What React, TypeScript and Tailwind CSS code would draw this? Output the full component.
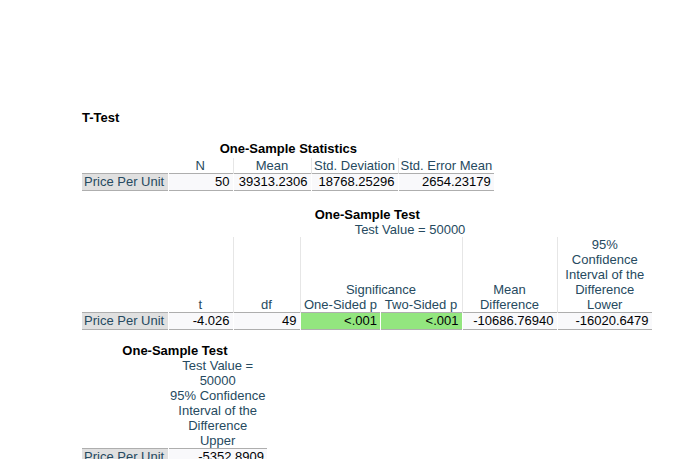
import React from 'react'

const hd = 'text-[#264a60] text-center align-bottom px-[2px] leading-[15px] font-normal whitespace-nowrap'
const hdLine = 'border-r border-[#e6e6e6]'
const lbl = 'bg-[#e0e0e0] text-[#264a60] text-left pl-[2px] h-[16px] leading-[16px] border-r border-white whitespace-nowrap'
const cell = 'bg-[#f9f9fb] text-[#010205] text-right pr-[3px] h-[16px] leading-[16px] border-r border-white whitespace-nowrap'
const sig = 'bg-[#93e67f] text-[#010205] text-right pr-[3px] h-[16px] leading-[16px] border-r border-white whitespace-nowrap'

const App = () => {
  return (
    <div className="h-[459px] w-[680px] overflow-hidden bg-white pl-[82px] pt-[110px] font-['Liberation_Sans',Arial,sans-serif] text-[13px]">
      <div className="font-bold leading-[15px] text-black">T-Test</div>

      {/* One-Sample Statistics */}
      <table className="mt-[16px] table-fixed border-collapse">
        <caption className="pb-[2px] text-center font-bold leading-[15px] text-black">One-Sample Statistics</caption>
        <colgroup>
          <col className="w-[86px]" />
          <col className="w-[65px]" />
          <col className="w-[78px]" />
          <col className="w-[87px]" />
          <col className="w-[95px]" />
        </colgroup>
        <thead>
          <tr className="border-b border-[#aeaeae]">
            <th className={hd}></th>
            <th className={hd + ' ' + hdLine}>N</th>
            <th className={hd + ' ' + hdLine}>Mean</th>
            <th className={hd + ' ' + hdLine}>Std. Deviation</th>
            <th className={hd}>Std. Error Mean</th>
          </tr>
        </thead>
        <tbody>
          <tr className="border-b border-[#aeaeae]">
            <td className={lbl}>Price Per Unit</td>
            <td className={cell}>50</td>
            <td className={cell}>39313.2306</td>
            <td className={cell}>18768.25296</td>
            <td className={cell}>2654.23179</td>
          </tr>
        </tbody>
      </table>

      {/* One-Sample Test */}
      <table className="mt-[16px] table-fixed border-collapse">
        <caption className="text-center font-bold leading-[15px] text-black">One-Sample Test</caption>
        <colgroup>
          <col className="w-[86px]" />
          <col className="w-[65px]" />
          <col className="w-[67px]" />
          <col className="w-[80px]" />
          <col className="w-[81px]" />
          <col className="w-[95px]" />
          <col className="w-[95px]" />
        </colgroup>
        <thead>
          <tr>
            <th className={hd}></th>
            <th className={hd} colSpan={6}>Test Value = 50000</th>
          </tr>
          <tr className="border-b border-[#aeaeae]">
            <th className={hd}></th>
            <th className={hd + ' ' + hdLine}>t</th>
            <th className={hd + ' ' + hdLine}>df</th>
            <th className="p-0 align-bottom font-normal text-[#264a60] leading-[15px]" colSpan={2}>
              <div className="text-center">Significance</div>
              <div className="flex">
                <div className="w-[80px] whitespace-nowrap text-center">One-Sided p</div>
                <div className="w-[81px] whitespace-nowrap text-center">Two-Sided p</div>
              </div>
            </th>
            <th className={hd + ' border-l border-[#e6e6e6] ' + hdLine}>
              Mean
              <br />
              Difference
            </th>
            <th className={hd}>
              95%
              <br />
              Confidence
              <br />
              Interval of the
              <br />
              Difference
              <br />
              Lower
            </th>
          </tr>
        </thead>
        <tbody>
          <tr className="border-b border-[#aeaeae]">
            <td className={lbl}>Price Per Unit</td>
            <td className={cell}>-4.026</td>
            <td className={cell}>49</td>
            <td className={sig}>&lt;.001</td>
            <td className={sig}>&lt;.001</td>
            <td className={cell}>-10686.76940</td>
            <td className={cell}>-16020.6479</td>
          </tr>
        </tbody>
      </table>

      {/* One-Sample Test, continued */}
      <table className="mt-[13px] table-fixed border-collapse">
        <caption className="text-center font-bold leading-[15px] text-black">One-Sample Test</caption>
        <colgroup>
          <col className="w-[86px]" />
          <col className="w-[93px]" />
        </colgroup>
        <thead>
          <tr className="border-b border-[#aeaeae]">
            <th className={hd}></th>
            <th className={hd + ' leading-[14.6px]'}>
              Test Value =
              <br />
              50000
              <br />
              95% Confidence
              <br />
              Interval of the
              <br />
              Difference
              <br />
              Upper
            </th>
          </tr>
        </thead>
        <tbody>
          <tr className="border-b border-[#aeaeae]">
            <td className={lbl}>Price Per Unit</td>
            <td className={cell}>-5352.8909</td>
          </tr>
        </tbody>
      </table>
    </div>
  )
}

export default App
